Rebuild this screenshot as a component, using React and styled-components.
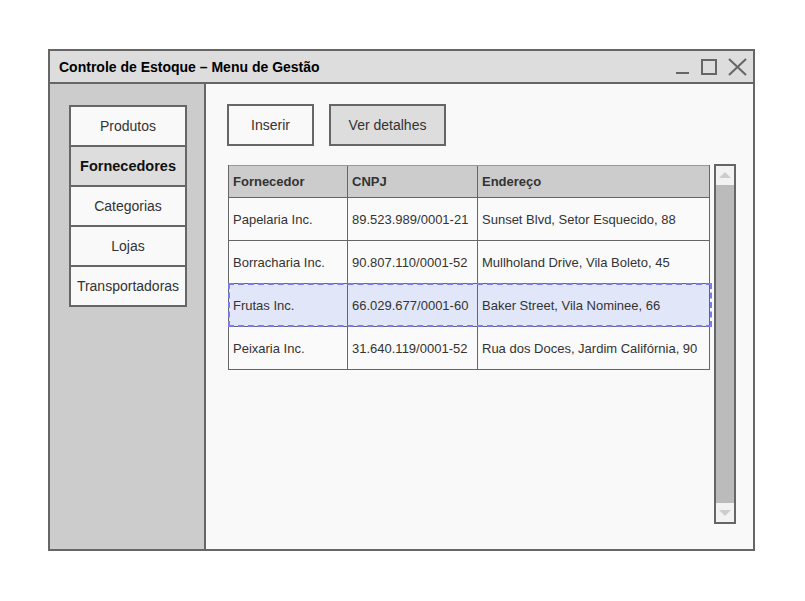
import React from "react";
import styled, { createGlobalStyle } from "styled-components";

const GlobalStyle = createGlobalStyle`
  html, body {
    margin: 0;
    padding: 0;
    background: #ffffff;
    font-family: "Liberation Sans", Arial, sans-serif;
  }
`;

const Page = styled.div`
  padding: 49px 0 0 48px;
`;

const Window = styled.div`
  box-sizing: border-box;
  width: 707px;
  height: 502px;
  border: 2px solid #666;
  background: #f9f9f9;
  display: flex;
  flex-direction: column;
`;

const TitleBar = styled.div`
  height: 31px;
  flex: none;
  background: #dddddd;
  border-bottom: 2px solid #666;
  display: flex;
  align-items: center;
  justify-content: space-between;
  padding: 0 4px 0 9px;
`;

const Title = styled.div`
  font-weight: bold;
  font-size: 14px;
  color: #000;
`;

const Controls = styled.div`
  display: flex;
  align-items: center;
`;

const Body = styled.div`
  flex: 1;
  display: flex;
  min-height: 0;
`;

const Sidebar = styled.div`
  box-sizing: border-box;
  width: 156px;
  flex: none;
  background: #cccccc;
  border-right: 2px solid #666;
  padding: 21px 0 0 19px;
`;

const NavItem = styled.div`
  box-sizing: border-box;
  width: 118px;
  height: 42px;
  border: 2px solid #666;
  margin-top: -2px;
  &:first-child {
    margin-top: 0;
  }
  background: ${(p) => (p.active ? "#dddddd" : "#f9f9f9")};
  font-weight: ${(p) => (p.active ? "bold" : "normal")};
  color: ${(p) => (p.active ? "#111" : "#333")};
  font-size: ${(p) => (p.active ? "14.5px" : "14px")};
  display: flex;
  align-items: center;
  justify-content: center;
`;

const Content = styled.div`
  flex: 1;
  padding: 20px 0 0 21px;
  display: flex;
  flex-direction: column;
`;

const Toolbar = styled.div`
  display: flex;
  gap: 15px;
`;

const Button = styled.div`
  box-sizing: border-box;
  height: 42px;
  width: ${(p) => p.w}px;
  border: 2px solid #666;
  background: ${(p) => (p.gray ? "#dddddd" : "#f9f9f9")};
  color: #333;
  font-size: 14px;
  display: flex;
  align-items: center;
  justify-content: center;
`;

const TableArea = styled.div`
  display: flex;
  align-items: flex-start;
  margin-top: 18px;
  gap: 4px;
`;

const Table = styled.div`
  margin-top: 1px;
  margin-left: 1px;
  width: 482px;
  border-left: 1px solid #666;
  border-right: 1px solid #666;
  box-sizing: border-box;
`;

const Row = styled.div`
  position: relative;
  display: grid;
  grid-template-columns: 118px 130px 1fr;
  height: ${(p) => (p.header ? 33 : 43)}px;
  box-sizing: border-box;
  border-bottom: 1px solid #666;
  border-top: ${(p) => (p.header ? "1px solid #999" : "none")};
  background: ${(p) =>
    p.header ? "#cccccc" : p.selected ? "#e1e7f8" : "#fafafa"};
  font-weight: ${(p) => (p.header ? "bold" : "normal")};
  &::after {
    content: "";
    display: ${(p) => (p.selected ? "block" : "none")};
    position: absolute;
    top: -1px;
    left: -1px;
    right: -3px;
    bottom: -1px;
    border: 2px dashed #7b7bee;
    pointer-events: none;
  }
`;

const Cell = styled.div`
  display: flex;
  align-items: center;
  padding-left: 4px;
  font-size: 13px;
  color: #333;
  border-left: ${(p) => (p.first ? "none" : "1px solid #666")};
  white-space: nowrap;
  overflow: hidden;
`;

const Scrollbar = styled.div`
  box-sizing: border-box;
  width: 22px;
  height: 360px;
  border: 2px solid #666;
  background: #f2f2f2;
  display: flex;
  flex-direction: column;
`;

const ArrowBox = styled.div`
  height: 19px;
  flex: none;
  display: flex;
  align-items: center;
  justify-content: center;
`;

const Thumb = styled.div`
  flex: 1;
  background: #bbbbbb;
`;

const rows = [
  ["Papelaria Inc.", "89.523.989/0001-21", "Sunset Blvd, Setor Esquecido, 88"],
  ["Borracharia Inc.", "90.807.110/0001-52", "Mullholand Drive, Vila Boleto, 45"],
  ["Frutas Inc.", "66.029.677/0001-60", "Baker Street, Vila Nominee, 66"],
  ["Peixaria Inc.", "31.640.119/0001-52", "Rua dos Doces, Jardim Califórnia, 90"],
];

const nav = ["Produtos", "Fornecedores", "Categorias", "Lojas", "Transportadoras"];

export default function App() {
  return (
    <Page>
      <GlobalStyle />
      <Window>
        <TitleBar>
          <Title>Controle de Estoque – Menu de Gestão</Title>
          <Controls>
            <svg width="76" height="20" viewBox="0 0 76 20">
              <line x1="3" y1="16" x2="16" y2="16" stroke="#666" strokeWidth="2" />
              <rect x="29" y="3" width="14" height="14" fill="none" stroke="#666" strokeWidth="2" />
              <line x1="56" y1="2" x2="73" y2="18" stroke="#666" strokeWidth="2" />
              <line x1="73" y1="2" x2="56" y2="18" stroke="#666" strokeWidth="2" />
            </svg>
          </Controls>
        </TitleBar>
        <Body>
          <Sidebar>
            {nav.map((n) => (
              <NavItem key={n} active={n === "Fornecedores"}>
                {n}
              </NavItem>
            ))}
          </Sidebar>
          <Content>
            <Toolbar>
              <Button w={87}>Inserir</Button>
              <Button w={117} gray>
                Ver detalhes
              </Button>
            </Toolbar>
            <TableArea>
              <Table>
                <Row header>
                  <Cell first>Fornecedor</Cell>
                  <Cell>CNPJ</Cell>
                  <Cell>Endereço</Cell>
                </Row>
                {rows.map((r, i) => (
                  <Row key={r[0]} selected={i === 2}>
                    <Cell first>{r[0]}</Cell>
                    <Cell>{r[1]}</Cell>
                    <Cell>{r[2]}</Cell>
                  </Row>
                ))}
              </Table>
              <Scrollbar>
                <ArrowBox>
                  <svg width="12" height="7" viewBox="0 0 12 7">
                    <polygon points="6,0 12,6 0,6" fill="#cccccc" />
                  </svg>
                </ArrowBox>
                <Thumb />
                <ArrowBox>
                  <svg width="12" height="7" viewBox="0 0 12 7">
                    <polygon points="0,1 12,1 6,7" fill="#cccccc" />
                  </svg>
                </ArrowBox>
              </Scrollbar>
            </TableArea>
          </Content>
        </Body>
      </Window>
    </Page>
  );
}
